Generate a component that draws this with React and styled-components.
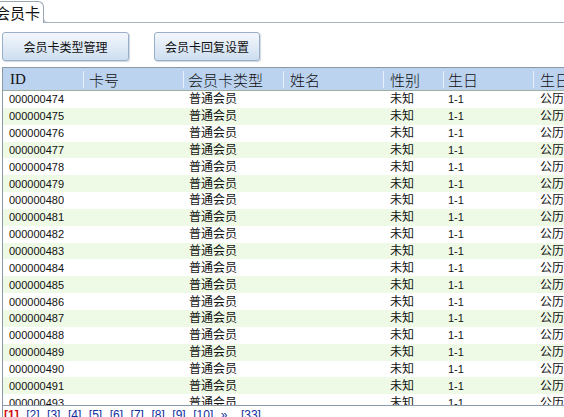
import React from "react";
import styled, { createGlobalStyle } from "styled-components";

const Global = createGlobalStyle`
  html, body { margin: 0; padding: 0; background: #fff; overflow: hidden; }
  body { width: 564px; height: 417px; font-family: "Liberation Sans", "Noto Sans CJK SC", sans-serif; }
`;

const Page = styled.div`
  width: 564px;
  height: 417px;
  overflow: hidden;
  display: flex;
  flex-direction: column;
`;

const TabStrip = styled.div`
  height: 22px;
  border-bottom: 1px solid #a8b4c0;
  display: flex;
  align-items: flex-end;
  flex-shrink: 0;
`;

const Tab = styled.div`
  margin-left: -8px;
  width: 52px;
  height: 22px;
  box-sizing: border-box;
  border: 1px solid #9aa6b3;
  border-bottom: none;
  border-top-right-radius: 6px;
  background: #fff;
  font-family: "Noto Sans CJK SC", sans-serif;
  font-size: 15px;
  line-height: 21px;
  padding-left: 2px;
  color: #111;
  margin-bottom: -1px;
  position: relative;
  &:after {
    content: "";
    position: absolute;
    right: -6px;
    bottom: 0;
    width: 5px;
    height: 5px;
    border-bottom-left-radius: 5px;
    border-left: 1px solid #9aa6b3;
    border-bottom: 1px solid #a8b4c0;
  }
`;

const Toolbar = styled.div`
  display: flex;
  gap: 25px;
  padding: 9px 0 0 2px;
  height: 35px;
  box-sizing: border-box;
  flex-shrink: 0;
`;

const Button = styled.div`
  width: ${(p) => p.$w}px;
  height: 29px;
  box-sizing: border-box;
  border: 1px solid #9aafc7;
  border-radius: 3px;
  background: linear-gradient(#f3f7fc 0%, #e2ecf7 45%, #cddef0 100%);
  box-shadow: 1px 1px 1px rgba(120, 140, 170, 0.35);
  display: flex;
  align-items: center;
  justify-content: center;
  font-family: "Noto Sans CJK SC", sans-serif;
  font-size: 12px;
  color: #111;
`;

const Grid = styled.div`
  margin: 9px 0 0 2px;
  border-top: 1px solid #8c9aa8;
  border-left: 1px solid #8c9aa8;
  flex: 1;
  overflow: hidden;
  display: flex;
  flex-direction: column;
`;

const cols = "80px 100px 100px 100px 60px 90px 100px";

const HeaderRow = styled.div`
  display: grid;
  grid-template-columns: ${cols};
  height: 22px;
  background: #bcd3ef;
  border-bottom: 1px solid #9fb0a0;
  flex-shrink: 0;
`;

const HeadCell = styled.div`
  box-sizing: border-box;
  padding-left: ${(p) => p.$pad}px;
  border-left: ${(p) => (p.$first ? "none" : "1px solid #e8f0fa")};
  margin-top: 3px;
  height: 17px;
  font-family: ${(p) => (p.$serif ? '"Liberation Serif"' : '"Noto Sans CJK SC"')}, serif;
  font-size: 15px;
  font-weight: 300;
  line-height: 17px;
  color: #111;
  white-space: nowrap;
`;

const Body = styled.div`
  height: 314px;
  flex-shrink: 0;
  overflow: hidden;
  border-bottom: 1px solid #8c9aa8;
  margin-left: -3px;
  padding-left: 3px;
`;

const Row = styled.div`
  display: grid;
  grid-template-columns: ${cols};
  height: 16.85px;
  background: ${(p) => (p.$alt ? "#eefae6" : "#fff")};
  margin-left: -3px;
  padding-left: 3px;
  align-items: center;
`;

const Cell = styled.div`
  padding-left: ${(p) => p.$pad}px;
  font-size: ${(p) => p.$size}px;
  font-family: "Liberation Sans", "Noto Sans CJK SC", sans-serif;
  color: #111;
  white-space: nowrap;
  line-height: 16px;
`;

const Pager = styled.div`
  padding: 2px 0 0 1px;
  font-size: 12px;
  line-height: 14px;
  font-family: "Liberation Sans", sans-serif;
  white-space: nowrap;
  display: flex;
  gap: 7.5px;
`;

const PageLink = styled.span`
  color: ${(p) => (p.$current ? "#d01010" : "#1030a0")};
  font-weight: ${(p) => (p.$current ? "bold" : "normal")};
  margin-left: ${(p) => (p.$wide ? 6 : 0)}px;
`;

const heads = [
  { t: "ID", pad: 7, serif: true },
  { t: "卡号", pad: 5 },
  { t: "会员卡类型", pad: 4 },
  { t: "姓名", pad: 6 },
  { t: "性别", pad: 6 },
  { t: "生日", pad: 4 },
  { t: "生日", pad: 6 },
];

const rows = Array.from({ length: 19 }, (_, i) => {
  let n = 474 + i;
  if (n >= 492) n += 1;
  return String(n).padStart(9, "0");
});

export default function App() {
  return (
    <Page>
      <Global />
      <TabStrip>
        <Tab>会员卡</Tab>
      </TabStrip>
      <Toolbar>
        <Button $w={127}>会员卡类型管理</Button>
        <Button $w={106}>会员卡回复设置</Button>
      </Toolbar>
      <Grid>
        <HeaderRow>
          {heads.map((h, i) => (
            <HeadCell key={i} $pad={h.pad} $serif={h.serif} $first={i === 0}>
              {h.t}
            </HeadCell>
          ))}
        </HeaderRow>
        <Body>
          {rows.map((id, i) => (
            <Row key={id} $alt={i % 2 === 1}>
              <Cell $pad={6} $size={11}>{id}</Cell>
              <Cell $pad={0} $size={12}></Cell>
              <Cell $pad={6} $size={12}>普通会员</Cell>
              <Cell $pad={0} $size={12}></Cell>
              <Cell $pad={7} $size={12}>未知</Cell>
              <Cell $pad={5} $size={11}>1-1</Cell>
              <Cell $pad={7} $size={12}>公历</Cell>
            </Row>
          ))}
        </Body>
        <Pager>
          <PageLink $current>[1]</PageLink>
          {[2, 3, 4, 5, 6, 7, 8, 9, 10].map((n) => (
            <PageLink key={n}>[{n}]</PageLink>
          ))}
          <PageLink>»</PageLink>
          <PageLink $wide>[33]</PageLink>
        </Pager>
      </Grid>
    </Page>
  );
}
